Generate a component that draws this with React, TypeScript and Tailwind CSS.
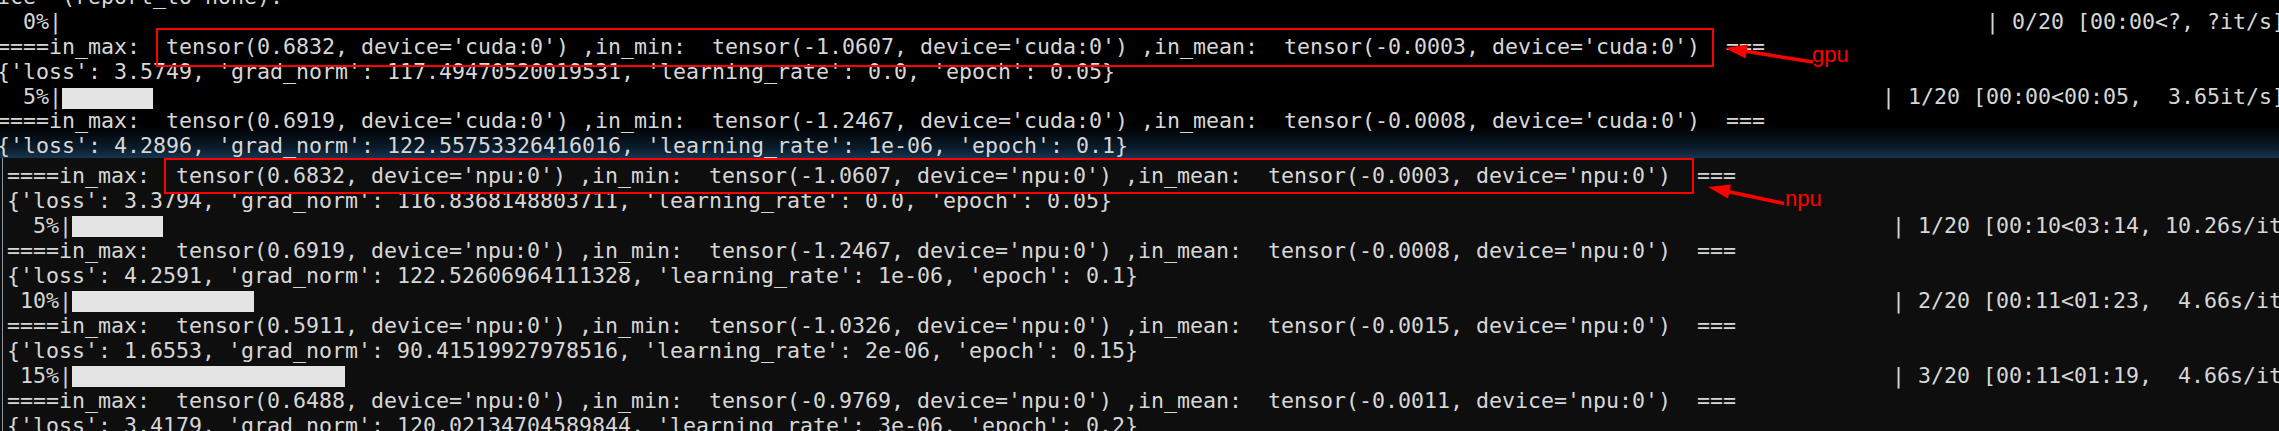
import React from "react";

const sp = (n: number) => " ".repeat(n);

type BarRow = {
  kind: "bar";
  pct: string;
  cols: number;
  widthClass: string;
  right: string;
};
type TextRow = { kind: "text"; text: string };
type Row = BarRow | TextRow;

const inMax = (dev: string, a: string, b: string, c: string) =>
  `====in_max:  tensor(${a}, device='${dev}') ,in_min:  tensor(${b}, device='${dev}') ,in_mean:  tensor(${c}, device='${dev}')  ===`;

const topRows: Row[] = [
  { kind: "text", text: "ice  (report_to none)." },
  { kind: "text", text: "  0%|" + sp(148) + "| 0/20 [00:00<?, ?it/s]" },
  { kind: "text", text: inMax("cuda:0", "0.6832", "-1.0607", "-0.0003") },
  {
    kind: "text",
    text: "{'loss': 3.5749, 'grad_norm': 117.49470520019531, 'learning_rate': 0.0, 'epoch': 0.05}",
  },
  {
    kind: "bar",
    pct: "  5%|",
    cols: 7,
    widthClass: "w-[91px]",
    right: "| 1/20 [00:00<00:05,  3.65it/s]",
  },
  { kind: "text", text: inMax("cuda:0", "0.6919", "-1.2467", "-0.0008") },
  {
    kind: "text",
    text: "{'loss': 4.2896, 'grad_norm': 122.55753326416016, 'learning_rate': 1e-06, 'epoch': 0.1}",
  },
];

const bottomRows: Row[] = [
  { kind: "text", text: "" },
  { kind: "text", text: inMax("npu:0", "0.6832", "-1.0607", "-0.0003") },
  {
    kind: "text",
    text: "{'loss': 3.3794, 'grad_norm': 116.8368148803711, 'learning_rate': 0.0, 'epoch': 0.05}",
  },
  {
    kind: "bar",
    pct: "  5%|",
    cols: 7,
    widthClass: "w-[91px]",
    right: "| 1/20 [00:10<03:14, 10.26s/it]",
  },
  { kind: "text", text: inMax("npu:0", "0.6919", "-1.2467", "-0.0008") },
  {
    kind: "text",
    text: "{'loss': 4.2591, 'grad_norm': 122.52606964111328, 'learning_rate': 1e-06, 'epoch': 0.1}",
  },
  {
    kind: "bar",
    pct: " 10%|",
    cols: 14,
    widthClass: "w-[182px]",
    right: "| 2/20 [00:11<01:23,  4.66s/it]",
  },
  { kind: "text", text: inMax("npu:0", "0.5911", "-1.0326", "-0.0015") },
  {
    kind: "text",
    text: "{'loss': 1.6553, 'grad_norm': 90.41519927978516, 'learning_rate': 2e-06, 'epoch': 0.15}",
  },
  {
    kind: "bar",
    pct: " 15%|",
    cols: 21,
    widthClass: "w-[273px]",
    right: "| 3/20 [00:11<01:19,  4.66s/it]",
  },
  { kind: "text", text: inMax("npu:0", "0.6488", "-0.9769", "-0.0011") },
  {
    kind: "text",
    text: "{'loss': 3.4179, 'grad_norm': 120.02134704589844, 'learning_rate': 3e-06, 'epoch': 0.2}",
  },
];

function Lines({
  rows,
  rowClass,
  barClass,
}: {
  rows: Row[];
  rowClass: string;
  barClass: string;
}) {
  return (
    <>
      {rows.map((r, i) =>
        r.kind === "text" ? (
          <div key={i} className={`${rowClass} whitespace-pre`}>
            {r.text}
          </div>
        ) : (
          <div key={i} className={`${rowClass} flex whitespace-pre`}>
            <span>{r.pct}</span>
            <div className={`${r.widthClass} ${barClass} shrink-0 bg-[#e4e4e4]`} />
            <span>
              {sp(140 - r.cols)}
              {r.right}
            </span>
          </div>
        )
      )}
    </>
  );
}

export default function App() {
  return (
    <div className="relative h-[431px] w-[2279px] overflow-hidden bg-black font-['DejaVu_Sans_Mono','Liberation_Mono',monospace] text-[21.6px] text-[#d7d7d7]">
      {/* GPU terminal capture */}
      <div className="h-[158px] overflow-hidden bg-[linear-gradient(180deg,#000_0px,#000_126px,#0a1c2b_148px,#163551_158px)]">
        <div className="-mt-[14.7px] -ml-[3px] w-[2400px] leading-[24.8px]">
          <Lines rows={topRows} rowClass="h-[24.8px]" barClass="mt-[3.5px] h-[21px]" />
        </div>
      </div>

      {/* NPU terminal capture */}
      <div className="flex h-[273px] overflow-hidden bg-[#0e0e0e]">
        <div className="w-[2px] shrink-0" />
        <div className="w-[1px] shrink-0 bg-[#8d969f]" />
        <div className="-mt-[20px] w-[2400px] shrink-0 pl-[4px] leading-[25px]">
          <Lines rows={bottomRows} rowClass="h-[25px]" barClass="mt-[3px] h-[21px]" />
        </div>
      </div>

      {/* annotations */}
      <div className="pointer-events-none absolute left-[156px] top-[28px] h-[39px] w-[1558px] border-2 border-[#ff0000]" />
      <div className="pointer-events-none absolute left-[164px] top-[158px] h-[36px] w-[1530px] border-2 border-[#ff0000]" />

      <svg
        className="pointer-events-none absolute left-0 top-0 h-[431px] w-[2279px]"
        viewBox="0 0 2279 431"
      >
        <line x1="1813" y1="62" x2="1744" y2="51" stroke="#ff0000" strokeWidth="3.5" />
        <polygon points="1725,48 1745.6,58.6 1747.8,44.4" fill="#ff0000" />
        <line x1="1784" y1="203.5" x2="1728" y2="191.5" stroke="#ff0000" strokeWidth="3.5" />
        <polygon points="1708,187 1728,198.6 1731,184.6" fill="#ff0000" />
      </svg>

      <span className="absolute left-[1812px] top-[44px] font-['Liberation_Sans',Arial,sans-serif] text-[22px] leading-[22px] text-[#ff0000]">
        gpu
      </span>
      <span className="absolute left-[1785px] top-[188px] font-['Liberation_Sans',Arial,sans-serif] text-[22px] leading-[22px] text-[#ff0000]">
        npu
      </span>
    </div>
  );
}
